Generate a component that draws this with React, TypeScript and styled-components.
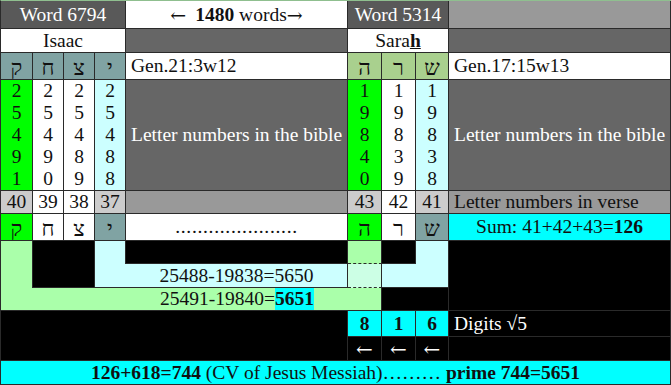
import styled, { createGlobalStyle } from "styled-components";

const GlobalStyle = createGlobalStyle`
  html, body {
    margin: 0;
    padding: 0;
    background: #ffffff;
  }
`;

const colors = {
  line: "#2a2a2a",
  dark: "#595959",
  mid: "#666666",
  light: "#999999",
  pale: "#cccccc",
  teal: "#80a3a3",
  sage: "#a9d08e",
  green: "#00ff00",
  ice: "#ccffff",
  mint: "#aaffaa",
  cross: "#ccffe5",
  cyan: "#00ffff",
  black: "#000000",
  white: "#ffffff",
};

const Sheet = styled.div`
  display: grid;
  grid-template-columns: 32px 31px 31px 31px 222px 34px 34px 33px 222px;
  grid-template-rows: 28px 24px 27px 111px 23px 27px 23px 24px 23px 26px 24px 24px;
  width: 671px;
  box-sizing: border-box;
  border-top: 1px solid #8fbf8f;
  border-left: 1px solid ${colors.line};
  font-family: "Liberation Serif", "Times New Roman", serif;
  font-size: 19.5px;
  color: #111111;
`;

type CellProps = {
  $col: string;
  $row: string;
  $bg?: string;
  $fg?: string;
  $noR?: boolean;
  $noB?: boolean;
  $dashB?: boolean;
  $align?: "left" | "center";
};

const Cell = styled.div<CellProps>`
  grid-column: ${(p) => p.$col};
  grid-row: ${(p) => p.$row};
  box-sizing: border-box;
  display: flex;
  align-items: center;
  justify-content: ${(p) => (p.$align === "left" ? "flex-start" : "center")};
  padding-left: ${(p) => (p.$align === "left" ? "5px" : "0")};
  background: ${(p) => p.$bg ?? colors.white};
  color: ${(p) => p.$fg ?? "#111111"};
  white-space: nowrap;
  overflow: hidden;
  border-right: ${(p) => (p.$noR ? "none" : `1px solid ${colors.line}`)};
  border-bottom: ${(p) =>
    p.$noB ? "none" : `1px ${p.$dashB ? "dashed" : "solid"} ${colors.line}`};
`;

const Letter = styled(Cell)`
  font-size: 22px;
  padding-top: 3px;
`;

const DigitColumn = styled(Cell)`
  flex-direction: column;
  justify-content: flex-start;
  line-height: 22px;
`;

const Dots = styled.span`
  align-self: flex-end;
  margin-bottom: 2px;
  letter-spacing: 0.7px;
`;

const Highlight = styled.b`
  background: ${colors.cyan};
`;

const ArrowGlyph = styled.span<{ $after?: number }>`
  font-family: "DejaVu Serif", serif;
  font-size: 19px;
  margin-right: ${(p) => p.$after ?? 0}px;
`;

const Arrow = styled(Cell)`
  font-family: "DejaVu Serif", serif;
  font-size: 20px;
  color: ${colors.white};
`;

const isaac = [
  { heb: "ק", digits: "25491", verse: "40", head: colors.teal, low: colors.green, verseBg: colors.pale, digitBg: colors.green },
  { heb: "ח", digits: "25490", verse: "39", head: colors.teal, low: colors.white, verseBg: colors.white, digitBg: colors.white },
  { heb: "צ", digits: "25489", verse: "38", head: colors.teal, low: colors.white, verseBg: colors.white, digitBg: colors.white },
  { heb: "י", digits: "25488", verse: "37", head: colors.teal, low: colors.teal, verseBg: colors.pale, digitBg: colors.ice },
];

const sarah = [
  { heb: "ה", digits: "19840", verse: "43", head: colors.sage, low: colors.green, verseBg: colors.pale, digitBg: colors.green },
  { heb: "ר", digits: "19839", verse: "42", head: colors.sage, low: colors.white, verseBg: colors.white, digitBg: colors.white },
  { heb: "ש", digits: "19838", verse: "41", head: colors.sage, low: colors.teal, verseBg: colors.pale, digitBg: colors.ice },
];

const App = () => {
  return (
    <>
      <GlobalStyle />
      <Sheet>
        {/* row 1 */}
        <Cell $col="1 / 5" $row="1" $bg={colors.dark} $fg={colors.white}>Word 6794</Cell>
        <Cell $col="5" $row="1">
          <ArrowGlyph $after={9}>←</ArrowGlyph>
          <b>1480</b>&nbsp;words<ArrowGlyph>→</ArrowGlyph>
        </Cell>
        <Cell $col="6 / 9" $row="1" $bg={colors.dark} $fg={colors.white}>Word 5314</Cell>
        <Cell $col="9" $row="1" $bg={colors.light} />

        {/* row 2 */}
        <Cell $col="1 / 5" $row="2">Isaac</Cell>
        <Cell $col="5" $row="2" $bg={colors.mid} />
        <Cell $col="6 / 9" $row="2">
          Sara<u><b>h</b></u>
        </Cell>
        <Cell $col="9" $row="2" $bg={colors.mid} />

        {/* rows 3 to 6, one column per letter */}
        {isaac.map((l, i) => (
          <Letter key={"ih" + i} $col={String(i + 1)} $row="3" $bg={l.head}>{l.heb}</Letter>
        ))}
        {sarah.map((l, i) => (
          <Letter key={"sh" + i} $col={String(i + 6)} $row="3" $bg={l.head}>{l.heb}</Letter>
        ))}
        <Cell $col="5" $row="3" $align="left">Gen.21:3w12</Cell>
        <Cell $col="9" $row="3" $align="left">Gen.17:15w13</Cell>

        {isaac.map((l, i) => (
          <DigitColumn key={"id" + i} $col={String(i + 1)} $row="4" $bg={l.digitBg}>
            {l.digits.split("").map((d, j) => (
              <span key={j}>{d}</span>
            ))}
          </DigitColumn>
        ))}
        {sarah.map((l, i) => (
          <DigitColumn key={"sd" + i} $col={String(i + 6)} $row="4" $bg={l.digitBg}>
            {l.digits.split("").map((d, j) => (
              <span key={j}>{d}</span>
            ))}
          </DigitColumn>
        ))}
        <Cell $col="5" $row="4" $bg={colors.mid} $fg={colors.white} $align="left">
          Letter numbers in the bible
        </Cell>
        <Cell $col="9" $row="4" $bg={colors.mid} $fg={colors.white} $align="left">
          Letter numbers in the bible
        </Cell>

        {isaac.map((l, i) => (
          <Cell key={"iv" + i} $col={String(i + 1)} $row="5" $bg={l.verseBg}>{l.verse}</Cell>
        ))}
        {sarah.map((l, i) => (
          <Cell key={"sv" + i} $col={String(i + 6)} $row="5" $bg={l.verseBg}>{l.verse}</Cell>
        ))}
        <Cell $col="5" $row="5" $bg={colors.light} />
        <Cell $col="9" $row="5" $bg={colors.light} $align="left">Letter numbers in verse</Cell>

        {isaac.map((l, i) => (
          <Letter key={"il" + i} $col={String(i + 1)} $row="6" $bg={l.low}>{l.heb}</Letter>
        ))}
        {sarah.map((l, i) => (
          <Letter key={"sl" + i} $col={String(i + 6)} $row="6" $bg={l.low}>{l.heb}</Letter>
        ))}
        <Cell $col="5" $row="6">
          <Dots>......................</Dots>
        </Cell>
        <Cell $col="9" $row="6" $bg={colors.cyan}>
          Sum: 41+42+43=<b>126</b>
        </Cell>

        {/* rows 7 to 9: the links between the letters */}
        <Cell $col="1" $row="7" $bg={colors.mint} $noB />
        <Cell $col="2 / 4" $row="7 / 9" $bg={colors.black} />
        <Cell $col="4" $row="7" $bg={colors.ice} $noB />
        <Cell $col="5" $row="7" $bg={colors.black} />
        <Cell $col="6" $row="7" $bg={colors.mint} $dashB />
        <Cell $col="7" $row="7" $bg={colors.black} />
        <Cell $col="8" $row="7" $bg={colors.ice} $noB />
        <Cell $col="9" $row="7 / 10" $bg={colors.black} />

        <Cell $col="1" $row="8" $bg={colors.mint} $noB />
        <Cell $col="4" $row="8" $bg={colors.ice} $noR />
        <Cell $col="5" $row="8" $bg={colors.ice}>25488-19838=5650</Cell>
        <Cell $col="6" $row="8" $bg={colors.cross} $dashB />
        <Cell $col="7" $row="8" $bg={colors.ice} $noR />
        <Cell $col="8" $row="8" $bg={colors.ice} />

        <Cell $col="1 / 5" $row="9" $bg={colors.mint} $noR />
        <Cell $col="5" $row="9" $bg={colors.mint} $noR>
          25491-19840=<Highlight>5651</Highlight>
        </Cell>
        <Cell $col="6" $row="9" $bg={colors.mint} />
        <Cell $col="7 / 9" $row="9" $bg={colors.black} />

        {/* rows 10 and 11 */}
        <Cell $col="1 / 6" $row="10 / 12" $bg={colors.black} />
        <Cell $col="6" $row="10" $bg={colors.cyan}><b>8</b></Cell>
        <Cell $col="7" $row="10" $bg={colors.cyan}><b>1</b></Cell>
        <Cell $col="8" $row="10" $bg={colors.cyan}><b>6</b></Cell>
        <Cell $col="9" $row="10" $bg={colors.black} $fg={colors.white} $align="left">
          Digits √5
        </Cell>
        <Arrow $col="6" $row="11" $bg={colors.black}>←</Arrow>
        <Arrow $col="7" $row="11" $bg={colors.black}>←</Arrow>
        <Arrow $col="8" $row="11" $bg={colors.black}>←</Arrow>
        <Cell $col="9" $row="11" $bg={colors.black} />

        {/* row 12 */}
        <Cell $col="1 / 10" $row="12" $bg={colors.cyan}>
          <b>126+618=744</b>&nbsp;(CV of Jesus Messiah)………&nbsp;<b>prime 744=5651</b>
        </Cell>
      </Sheet>
    </>
  );
};

export default App;
